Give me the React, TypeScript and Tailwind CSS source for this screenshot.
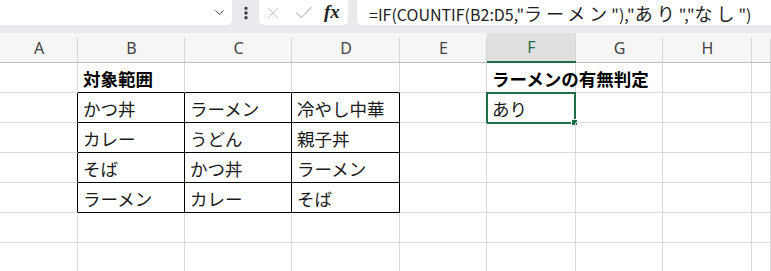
import { ChevronDown, X, Check, EllipsisVertical } from "lucide-react";

const cols = ["A", "B", "C", "D", "E", "F", "G", "H", ""];
const widths = [78, 107, 107, 108, 87, 89, 87, 89, 19];

// sheet contents, row index -> column index -> text
const data: Record<number, Record<number, string>> = {
  0: { 1: "対象範囲", 5: "ラーメンの有無判定" },
  1: { 1: "かつ丼", 2: "ラーメン", 3: "冷やし中華", 5: "あり" },
  2: { 1: "カレー", 2: "うどん", 3: "親子丼" },
  3: { 1: "そば", 2: "かつ丼", 3: "ラーメン" },
  4: { 1: "ラーメン", 2: "カレー", 3: "そば" },
};

const cellFont = { fontFamily: '"Noto Sans CJK JP", "Noto Sans", sans-serif' };

function Cell({ r, c }: { r: number; c: number }) {
  const text = data[r]?.[c] ?? "";
  const blackRight = r >= 1 && r <= 4 && c <= 3;
  const blackBottom = r <= 4 && c >= 1 && c <= 3;
  const selected = r === 1 && c === 5;
  return (
    <div
      className={
        "relative h-[30px] flex items-center pl-[5px] text-[17.5px] text-[#1a1a1a] whitespace-nowrap border-r border-b " +
        (blackRight ? "border-r-black " : "border-r-[#dadada] ") +
        (blackBottom ? "border-b-black " : "border-b-[#dadada] ") +
        (r === 0 ? "font-bold text-black" : "")
      }
      style={{ ...cellFont, width: widths[c] }}
    >
      <span className="leading-none pt-[2px]">{text}</span>
      {selected && (
        <div className="absolute -left-[1px] -top-[1px] w-[90px] h-[32px] border-2 border-[#1e6e45]">
          <div className="absolute -right-[4px] -bottom-[4px] w-[7px] h-[7px] bg-[#1e6e45] border border-white" />
        </div>
      )}
    </div>
  );
}

function Jp({ children }: { children: string }) {
  return <span className="text-[18px] tracking-[4px]">{children}</span>;
}

function App() {
  return (
    <div className="w-[771px] h-[271px] overflow-hidden bg-white">
      {/* Formula bar */}
      <div className="h-[33px] bg-[#e8eaed] flex items-start">
        <div className="w-[232px] h-[25px] bg-white rounded-br-[5px] flex items-center justify-end pr-[5px]">
          <ChevronDown className="w-[15px] h-[15px] text-[#333]" strokeWidth={1.5} />
        </div>
        <div className="w-[27px] h-[25px] flex items-center justify-center">
          <EllipsisVertical className="w-[16px] h-[16px] text-[#333]" strokeWidth={3} />
        </div>
        <div className="w-[89px] h-[25px] bg-white rounded-b-[5px] flex items-center pl-[5px]">
          <X className="w-[18px] h-[18px] text-[#c4c4c4]" strokeWidth={1.3} />
          <Check className="w-[22px] h-[22px] ml-[11px] text-[#c4c4c4]" strokeWidth={1.3} />
          <span
            className="ml-[9px] text-[19px] italic font-bold text-[#222] leading-none -mt-[2px]"
            style={{ fontFamily: '"Liberation Serif", serif' }}
          >
            fx
          </span>
        </div>
        <div className="ml-[9px] flex-1 h-[25px] bg-white rounded-bl-[5px] flex items-center pl-[12px]">
          <span
            className="text-[16px] text-[#222] whitespace-nowrap leading-none"
            style={cellFont}
          >
            =IF(COUNTIF(B2:D5,"<Jp>ラーメン</Jp>"),"<Jp>あり</Jp>","<Jp>なし</Jp>")
          </span>
        </div>
      </div>

      {/* Column headers */}
      <div className="flex h-[30px] bg-[#f6f6f6] border-b border-[#bdbdbd]">
        {cols.map((h, i) => (
          <div
            key={i}
            className={
              "relative flex items-center justify-center text-[16px] " +
              (h === "F"
                ? "bg-[#e0e0e0] text-[#1e6e45] border-b-2 border-[#1e6e45] -mb-[1px]"
                : "text-[#444]")
            }
            style={{ width: widths[i], fontFamily: '"Noto Sans", sans-serif' }}
          >
            {h}
            <div className="absolute right-0 top-[5px] bottom-0 w-px bg-[#d4d4d4]" />
          </div>
        ))}
      </div>

      {/* Rows */}
      {[0, 1, 2, 3, 4, 5, 6].map((r) => (
        <div key={r} className="flex">
          {cols.map((_, c) => (
            <Cell key={c} r={r} c={c} />
          ))}
        </div>
      ))}
    </div>
  );
}

export default App;
